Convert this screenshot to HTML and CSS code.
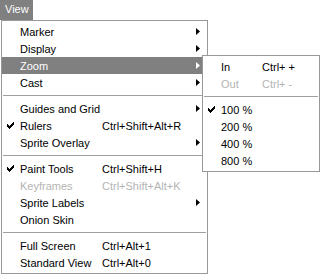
FILE: index.html
```html
<!DOCTYPE html>
<html lang="en">
<head>
  <meta charset="UTF-8" />
  <title>View menu</title>
  <link rel="stylesheet" href="styles.css">
</head>
<body>
  <div class="menubar">
    <span class="menubar-title">View</span>
  </div>

  <div class="menu main-menu">
    <div class="item"><span class="check"></span><span class="label">Marker</span><span class="keys"></span><span class="arrow"></span></div>
    <div class="item"><span class="check"></span><span class="label">Display</span><span class="keys"></span><span class="arrow"></span></div>
    <div class="item active"><span class="check"></span><span class="label">Zoom</span><span class="keys"></span><span class="arrow"></span></div>
    <div class="item"><span class="check"></span><span class="label">Cast</span><span class="keys"></span><span class="arrow"></span></div>
    <div class="sep"></div>
    <div class="item"><span class="check"></span><span class="label">Guides and Grid</span><span class="keys"></span><span class="arrow"></span></div>
    <div class="item checked"><span class="check"></span><span class="label">Rulers</span><span class="keys">Ctrl+Shift+Alt+R</span></div>
    <div class="item"><span class="check"></span><span class="label">Sprite Overlay</span><span class="keys"></span><span class="arrow"></span></div>
    <div class="sep"></div>
    <div class="item checked"><span class="check"></span><span class="label">Paint Tools</span><span class="keys">Ctrl+Shift+H</span></div>
    <div class="item disabled"><span class="check"></span><span class="label">Keyframes</span><span class="keys">Ctrl+Shift+Alt+K</span></div>
    <div class="item"><span class="check"></span><span class="label">Sprite Labels</span><span class="keys"></span><span class="arrow"></span></div>
    <div class="item"><span class="check"></span><span class="label">Onion Skin</span><span class="keys"></span></div>
    <div class="sep"></div>
    <div class="item"><span class="check"></span><span class="label">Full Screen</span><span class="keys">Ctrl+Alt+1</span></div>
    <div class="item"><span class="check"></span><span class="label">Standard View</span><span class="keys">Ctrl+Alt+0</span></div>
  </div>

  <div class="menu sub-menu">
    <div class="item"><span class="check"></span><span class="label">In</span><span class="keys">Ctrl+ +</span></div>
    <div class="item disabled"><span class="check"></span><span class="label">Out</span><span class="keys">Ctrl+ -</span></div>
    <div class="sep"></div>
    <div class="item checked"><span class="check"></span><span class="label">100 %</span><span class="keys"></span></div>
    <div class="item"><span class="check"></span><span class="label">200 %</span><span class="keys"></span></div>
    <div class="item"><span class="check"></span><span class="label">400 %</span><span class="keys"></span></div>
    <div class="item"><span class="check"></span><span class="label">800 %</span><span class="keys"></span></div>
  </div>
</body>
</html>
```

FILE: styles.css
```css
body {
  margin: 0;
  background: #fff;
  font-family: 'Liberation Sans', Arial, sans-serif;
  font-size: 11px;
  color: #000;
  position: relative;
  height: 274px;
  overflow: hidden;
}
.menubar {
  height: 20px;
  display: flex;
}
.menubar-title {
  width: 33px;
  background: #808080;
  color: #fff;
  padding-left: 5px;
  box-sizing: border-box;
  line-height: 19px;
}
.menu {
  background: #fff;
  border: 1px solid #999;
  padding: 2px 0;
  box-sizing: border-box;
}
.main-menu {
  margin-left: 1px;
  width: 207px;
  --label-w: 82px;
}
.sub-menu {
  position: absolute;
  left: 202px;
  top: 55px;
  width: 118px;
  --label-w: 41px;
}
.item {
  height: 17px;
  display: flex;
  align-items: center;
  padding-right: 7px;
  white-space: nowrap;
}
.check {
  width: 18px;
  height: 17px;
  flex: none;
  position: relative;
}
.checked .check::before {
  content: "";
  position: absolute;
  left: 5px;
  top: 5px;
  width: 7px;
  height: 7px;
  background: url("data:image/svg+xml;utf8,<svg xmlns='http://www.w3.org/2000/svg' width='7' height='7'><path d='M0 2h1v1h1v1h1v-1h1v-1h1v-1h1v-1h1v3h-1v1h-1v1h-1v1h-1v1h-1v-1h-1v-1h-1z' fill='black'/></svg>") no-repeat;
}
.label {
  width: var(--label-w);
  flex: none;
}
.keys {
  flex: 1;
}
.arrow {
  width: 4px;
  height: 7px;
  flex: none;
  background: #000;
  clip-path: polygon(0 0, 100% 50%, 0 100%);
}
.active {
  background: #808080;
  color: #fff;
}
.active .arrow {
  background: #fff;
}
.disabled {
  color: #b4b4b4;
}
.sep {
  height: 9px;
  margin: 0 1px;
  display: flex;
  align-items: center;
}
.sep::before {
  content: "";
  flex: 1;
  height: 1px;
  background: #a0a0a0;
}
```
